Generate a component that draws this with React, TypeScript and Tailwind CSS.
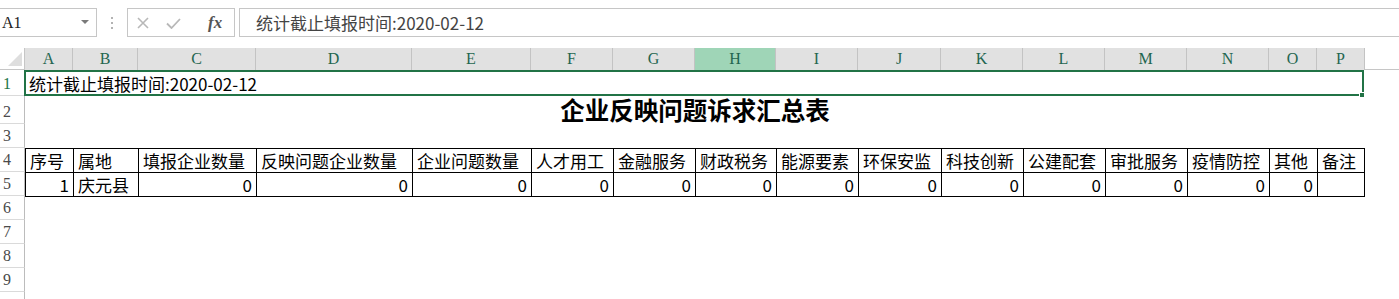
import React from "react";

const cjk = '"Noto Sans CJK SC", "Noto Sans", sans-serif';
const serif = '"Liberation Serif", "DejaVu Serif", serif';

// column letters with their widths (A..P)
const columns = [
  { key: "A", w: "w-[48px]" },
  { key: "B", w: "w-[65px]" },
  { key: "C", w: "w-[118px]" },
  { key: "D", w: "w-[156px]" },
  { key: "E", w: "w-[119px]" },
  { key: "F", w: "w-[82px]" },
  { key: "G", w: "w-[82px]" },
  { key: "H", w: "w-[81px]" },
  { key: "I", w: "w-[82px]" },
  { key: "J", w: "w-[83px]" },
  { key: "K", w: "w-[82px]" },
  { key: "L", w: "w-[82px]" },
  { key: "M", w: "w-[82px]" },
  { key: "N", w: "w-[82px]" },
  { key: "O", w: "w-[48px]" },
  { key: "P", w: "w-[48px]" },
];

const headers = [
  "序号",
  "属地",
  "填报企业数量",
  "反映问题企业数量",
  "企业问题数量",
  "人才用工",
  "金融服务",
  "财政税务",
  "能源要素",
  "环保安监",
  "科技创新",
  "公建配套",
  "审批服务",
  "疫情防控",
  "其他",
  "备注",
];

// row 5: [text, right aligned?]
const dataRow: [string, boolean][] = [
  ["1", true],
  ["庆元县", false],
  ["0", true],
  ["0", true],
  ["0", true],
  ["0", true],
  ["0", true],
  ["0", true],
  ["0", true],
  ["0", true],
  ["0", true],
  ["0", true],
  ["0", true],
  ["0", true],
  ["0", true],
  ["", false],
];

function RowHeader({ n, h, active }: { n?: number; h: string; active?: boolean }) {
  return (
    <div
      className={`w-[25px] ${h} shrink-0 flex items-end pl-[3px] pb-[3px] bg-white border-r border-b border-r-[#bcbcbc] border-b-[#dadada] text-[16px] leading-none ${
        active ? "text-[#217346]" : "text-[#4a4a4a]"
      }`}
      style={{ fontFamily: serif }}
    >
      {n}
    </div>
  );
}

function FormulaBar() {
  return (
    <div className="flex h-[29px] mt-[8px] mb-[11px]">
      {/* Name box */}
      <div className="w-[97px] h-full border border-l-0 border-[#c6c6c6] flex items-center pl-[2px]">
        <span className="text-[16px] text-[#222]" style={{ fontFamily: serif }}>
          A1
        </span>
        <svg className="ml-auto mr-[7px]" width="8" height="5" viewBox="0 0 8 5">
          <polygon points="0,0 8,0 4,4" fill="#7a7a7a" />
        </svg>
      </div>

      {/* grip dots */}
      <div className="w-[30px] flex flex-col items-center justify-center gap-[3px]">
        <span className="w-[2px] h-[2px] bg-[#b3b3b3]" />
        <span className="w-[2px] h-[2px] bg-[#b3b3b3]" />
        <span className="w-[2px] h-[2px] bg-[#b3b3b3]" />
      </div>

      {/* cancel / enter / fx */}
      <div className="w-[108px] h-full border border-[#c6c6c6] flex items-center pl-[9px]">
        <svg width="12" height="12" viewBox="0 0 12 12">
          <path d="M1 1L11 11M11 1L1 11" stroke="#b8b8b8" strokeWidth="1.6" />
        </svg>
        <svg className="ml-[17px] mt-[2px]" width="15" height="11" viewBox="0 0 15 11">
          <path d="M1 5.5L5.5 10L14 1" stroke="#b8b8b8" strokeWidth="1.8" fill="none" />
        </svg>
        <span
          className="ml-[27px] text-[17px] italic font-bold text-[#555] leading-none"
          style={{ fontFamily: serif }}
        >
          fx
        </span>
      </div>

      {/* formula input */}
      <div
        className="flex-1 ml-[4px] h-full border border-r-0 border-[#c6c6c6] flex items-center pl-[16px] text-[17px] text-[#444]"
        style={{ fontFamily: cjk }}
      >
        统计截止填报时间:2020-02-12
      </div>
    </div>
  );
}

export default function App() {
  return (
    <div className="w-[1399px] h-[299px] overflow-hidden bg-white" style={{ fontFamily: cjk }}>
      <FormulaBar />

      {/* Column headers */}
      <div className="flex h-[22px]">
        <div className="w-[25px] shrink-0 relative bg-white border-r border-b border-[#c6c6c6]">
          <svg className="absolute left-0 top-0" width="24" height="21" viewBox="0 0 24 21">
            <polygon points="22,4 22,18 8,18" fill="#dedede" />
          </svg>
        </div>
        {columns.map((c) => (
          <div
            key={c.key}
            className={`${c.w} shrink-0 flex items-center justify-center border-r border-[#c3c3c3] text-[16px] text-[#1f6650] ${
              c.key === "H" ? "bg-[#9fd5b7]" : "bg-[#e1e1e1]"
            }`}
            style={{ fontFamily: serif }}
          >
            {c.key}
          </div>
        ))}
        <div className="flex-1 border-b border-[#c6c6c6]" />
      </div>

      {/* Row 1: merged & selected */}
      <div className="flex h-[26px]">
        <RowHeader n={1} h="h-[26px]" active />
        <div className="w-[1340px] shrink-0 relative border-2 border-[#217346] -ml-[1px] flex items-center pl-[3px] pt-[1px] text-[17px] text-black">
          统计截止填报时间:2020-02-12
          <span className="absolute -right-[3px] -bottom-[4px] w-[6px] h-[6px] bg-[#217346] border border-white" />
        </div>
      </div>

      {/* Row 2: title */}
      <div className="flex h-[28px]">
        <RowHeader n={2} h="h-[28px]" />
        <div className="w-[1340px] shrink-0 flex items-center justify-center text-[24.5px] font-bold text-black leading-none pt-[1px]">
          企业反映问题诉求汇总表
        </div>
      </div>

      {/* Row 3 */}
      <div className="flex h-[24px]">
        <RowHeader n={3} h="h-[24px]" />
      </div>

      {/* Row 4: table header */}
      <div className="flex h-[24px]">
        <RowHeader n={4} h="h-[24px]" />
        {columns.map((c, i) => (
          <div
            key={c.key}
            className={`${c.w} shrink-0 flex items-center pl-[4px] border-t border-l border-black text-[17px] text-black whitespace-nowrap overflow-hidden ${
              i === columns.length - 1 ? "border-r" : ""
            }`}
          >
            {headers[i]}
          </div>
        ))}
      </div>

      {/* Row 5: data */}
      <div className="flex h-[24px]">
        <RowHeader n={5} h="h-[24px]" />
        {columns.map((c, i) => (
          <div
            key={c.key}
            className={`${c.w} shrink-0 flex items-center border-t border-l border-black text-[17px] text-black ${
              dataRow[i][1] ? "justify-end pr-[4px]" : "pl-[4px]"
            } ${i === columns.length - 1 ? "border-r" : ""}`}
          >
            {dataRow[i][0]}
          </div>
        ))}
      </div>

      {/* Rows 6-9, plus the top sliver of row 10 */}
      <div className="flex h-[24px]">
        <RowHeader n={6} h="h-[24px]" />
        <div className="w-[1340px] shrink-0 border-t border-black" />
      </div>
      {[7, 8, 9].map((n) => (
        <div key={n} className="flex h-[24px]">
          <RowHeader n={n} h="h-[24px]" />
        </div>
      ))}
      <div className="flex h-[24px]">
        <RowHeader h="h-[24px]" />
      </div>
    </div>
  );
}
